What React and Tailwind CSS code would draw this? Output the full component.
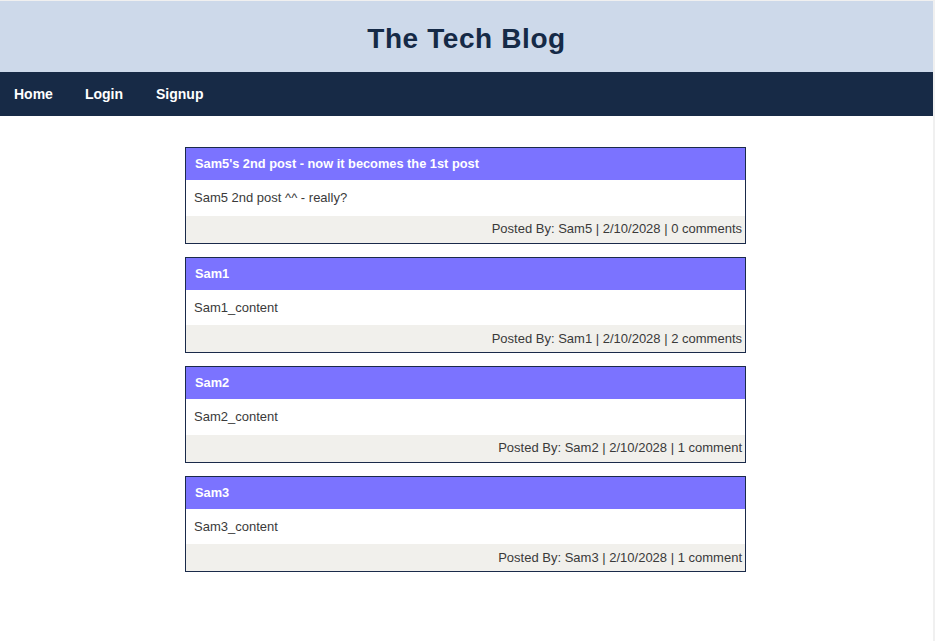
import React from "react";

const posts = [
  {
    title: "Sam5's 2nd post - now it becomes the 1st post",
    content: "Sam5 2nd post ^^ - really?",
    author: "Sam5",
    date: "2/10/2028",
    comments: "0 comments",
  },
  { title: "Sam1", content: "Sam1_content", author: "Sam1", date: "2/10/2028", comments: "2 comments" },
  { title: "Sam2", content: "Sam2_content", author: "Sam2", date: "2/10/2028", comments: "1 comment" },
  { title: "Sam3", content: "Sam3_content", author: "Sam3", date: "2/10/2028", comments: "1 comment" },
];

const App = () => {
  return (
    <div className="min-h-screen bg-[#f0f0f0] pr-[2px] pt-px font-['Liberation_Sans',Arial,sans-serif]">
      <div className="min-h-[640px] bg-white">
        <header className="h-[71px] bg-[#cdd9ea] flex items-center justify-center">
          <h1 className="text-[28px] font-bold tracking-[0.6px] text-[#152a47] pt-1">The Tech Blog</h1>
        </header>

        {/* Nav */}
        <nav className="h-[44px] bg-[#172a46] flex items-center pl-[14px] gap-8 text-white text-[14px] font-bold">
          <a href="#">Home</a>
          <a href="#">Login</a>
          <a href="#" className="ml-px">Signup</a>
        </nav>

        <main className="pt-[31px] pr-[2px] flex flex-col items-center gap-[13px]">
          {posts.map((post) => (
            <div key={post.title} className="w-[561px] border border-[#1a2a4a]">
              <div className="h-[32px] bg-[#7b73ff] text-white font-bold text-[12.8px] flex items-center px-[9px]">
                {post.title}
              </div>
              <div className="h-[35.5px] bg-white text-[#3a3a3a] text-[13px] flex items-center px-[8px]">
                {post.content}
              </div>
              <div className="h-[27px] bg-[#f1f0ec] text-[#3a3a3a] text-[13px] flex items-center justify-end px-[3px]">
                Posted By: {post.author} | {post.date} | {post.comments}
              </div>
            </div>
          ))}
        </main>
      </div>
    </div>
  );
};

export default App;
